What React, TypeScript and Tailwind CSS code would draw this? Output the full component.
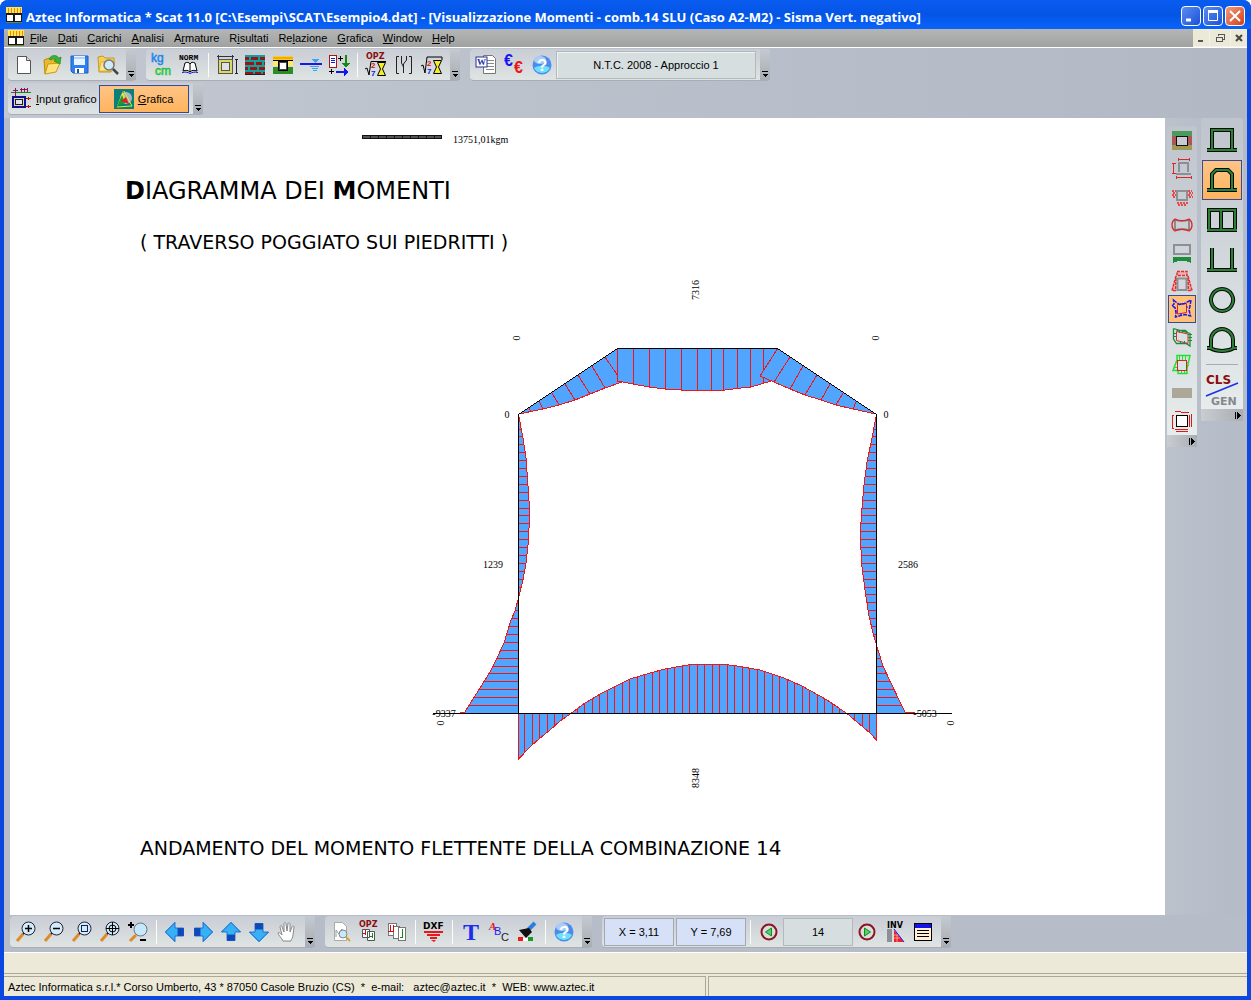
import type { ReactNode } from 'react';
import { clsx } from 'clsx';

type Pt = [number, number];

const toPoints = (pts: Pt[]) => pts.map(p => p.join(',')).join(' ');

// linear interpolation of a polyline, looking up `at` on one axis
function lookup(pts: Pt[], at: number, axis: 0 | 1) {
  const other = axis === 0 ? 1 : 0;
  for (let i = 1; i < pts.length; i++) {
    const a = pts[i - 1];
    const b = pts[i];
    if (at >= a[axis] && at <= b[axis]) {
      const t = (at - a[axis]) / (b[axis] - a[axis]);
      return a[other] + (b[other] - a[other]) * t;
    }
  }
  return null;
}

function Icon({ children, w = 22, h = 22, soft = false }: { children: ReactNode; w?: number; h?: number; soft?: boolean }) {
  return (
    <svg width={w} height={h} viewBox={`0 0 ${w} ${h}`} fill="none" className="overflow-visible" shapeRendering={soft ? 'auto' : 'crispEdges'} aria-hidden="true">
      {children}
    </svg>
  );
}

function AppIcon() {
  return (
    <Icon w={16} h={16}>
      <rect width="16" height="7" fill="#ffe94a" />
      <path d="M2.500 1v5M5.500 1v5M8.500 1v5M11.500 1v5M14.500 1v5" stroke="#f08020" />
      <rect y="6" width="16" height="9" fill="#181818" />
      <rect x="1" y="8" width="6" height="6" fill="#fff" />
      <rect x="9" y="8" width="6" height="6" fill="#fff" />
      <rect y="15" width="16" height="1" fill="#6a8a30" />
    </Icon>
  );
}

/* ---------- main toolbar icons ---------- */

const newIcon = (
  <Icon soft>
    <path d="M4.500 2.500h9l4 4v13h-13z" fill="#fff" stroke="#555" />
    <path d="M13.500 2.500v4h4" fill="#ddd" stroke="#555" />
  </Icon>
);

const openIcon = (
  <Icon soft>
    <path d="M3 6l5-2 2 2 6-1v5l-9 2-3 8z" fill="#e8b92c" stroke="#b88a10" />
    <path d="M7 10l12-1-4 9-11 2z" fill="#ffe27a" stroke="#c79a1c" />
    <path d="M8 5c2-4 7-5 10-1l2-1-1 7-6-3 2-1c-1-2-4-2-5 0z" fill="#35b435" stroke="#188018" strokeWidth=".6" />
  </Icon>
);

const saveIcon = (
  <Icon soft>
    <path d="M2 2h17v17H4l-2-2z" fill="#2f80ee" stroke="#1c5fc0" />
    <rect x="5" y="2" width="11" height="9" fill="#eaf4ff" />
    <path d="M5 4h11" stroke="#68b4ff" />
    <rect x="6" y="14" width="9" height="5" fill="#fff" />
    <rect x="8" y="15" width="2" height="4" fill="#2050a0" />
  </Icon>
);

const findIcon = (
  <Icon soft>
    <path d="M1 3l5-1 2 2h9v5l-3 9H2z" fill="#f6cf58" stroke="#c39a22" />
    <path d="M4 8h14l-3 9H2z" fill="#ffe58a" stroke="#c39a22" strokeWidth=".6" />
    <circle cx="12" cy="11" r="5" fill="#cfe8fa" stroke="#777" strokeWidth="1.500" />
    <path d="M16 15l5 5" stroke="#444" strokeWidth="2.500" />
  </Icon>
);

const unitsIcon = (
  <Icon w={24} h={24} soft>
    <text x="1" y="9" fontSize="12" fontFamily="Liberation Sans" fill="#1c86ee" stroke="#1c86ee" strokeWidth=".5">kg</text>
    <text x="5" y="22" fontSize="12" fontFamily="Liberation Sans" fill="#1fc43a" stroke="#1fc43a" strokeWidth=".5">cm</text>
  </Icon>
);

const normIcon = (
  <Icon w={24} h={24} soft>
    <text x="1" y="7" fontSize="8" fontWeight="bold" fontFamily="Liberation Mono" fill="#000">NORM</text>
    <path d="M5 18l2-8c2-1 4-1 5 1 1-2 3-2 5-1l2 8c-3-1-5-1-7 1-2-2-4-2-7-1z" fill="#fff" stroke="#000" />
    <path d="M12 11v8" stroke="#000" />
    <path d="M4 19.500c4-1 6 0 8 1 2-1 4-2 8-1" stroke="#1414c8" />
  </Icon>
);

const sectionIcon = (
  <Icon>
    <rect x="3" y="6" width="13" height="13" fill="#dcd860" />
    <rect x="2.500" y="5.500" width="14" height="14" stroke="#555" />
    <rect x="5.500" y="8.500" width="8" height="8" fill="#dde1e4" stroke="#555" />
    <path d="M1 2.500h17M2.500 1v4M16.500 1v4" stroke="#333" />
    <path d="M20.500 5v15M19 5.500h3M19 19.500h3" stroke="#222" />
  </Icon>
);

const brickIcon = (
  <Icon>
    <rect x="1" y="1" width="20" height="20" fill="#9a1414" />
    <path d="M1 2h20M1 7h20M1 12h20M1 17h20M6 2v5M15 2v5M11 7v5M19 7v5M5 12v5M14 12v5M10 17v4M18 17v4" stroke="#10a0a0" strokeWidth="2" />
    <path d="M1 20.500h20" stroke="#222" />
  </Icon>
);

const soilIcon = (
  <Icon>
    <rect x="1" y="2" width="20" height="5" fill="#f6d21e" />
    <rect x="1" y="3" width="20" height="2" fill="#f0a81c" />
    <rect x="1" y="6" width="20" height="6" fill="#ffe76e" />
    <rect x="1" y="13" width="20" height="7" fill="#2d8c22" />
    <path d="M1 6.500h20" stroke="#000" />
    <rect x="7" y="8" width="8" height="8" fill="#fff" />
    <rect x="6.500" y="7.500" width="9" height="9" stroke="#000" />
    <rect x="7.500" y="8.500" width="7" height="7" stroke="#444" />
  </Icon>
);

const waterIcon = (
  <Icon>
    <path d="M0 10h22" stroke="#1a1ae8" strokeWidth="2" />
    <path d="M12 5h7l-4 4z" fill="#3aa6f0" />
    <path d="M10 12.500h9M12 14.500h6M13 16.500h4" stroke="#3aa6f0" />
  </Icon>
);

const loadIcon = (
  <Icon>
    <rect x="1.500" y="1.500" width="7" height="12" fill="#fff" stroke="#a01818" />
    <path d="M3 4.500h4M3 6.500h4M3 8.500h4" stroke="#1818d8" />
    <path d="M10 4.500h5M12.500 2v5M1 17.500h5M3.500 15v5" stroke="#000" />
    <path d="M18 1v11" stroke="#148a14" strokeWidth="2" />
    <path d="M14 9h8l-4 5z" fill="#148a14" />
    <path d="M8 18h9" stroke="#1414f0" strokeWidth="2" />
    <path d="M16 14l5 4-5 4z" fill="#1414f0" />
  </Icon>
);

const calcGlyphs = (
  <>
    <text x="6" y="12" fontSize="8" fontWeight="bold" fontFamily="Liberation Sans" fill="#e01010">2</text>
    <text x="6" y="20" fontSize="8" fontWeight="bold" fontFamily="Liberation Sans" fill="#1414e8">7</text>
    <path d="M12.500 6.500h8l-3 6.500 3 6.500h-8l3-6.500z" fill="#f4ec28" stroke="#000" />
  </>
);

const dpzCalcIcon = (
  <Icon soft>
    <text x="1" y="5" fontSize="8" fontWeight="bold" fontFamily="DejaVu Sans" fill="#8c0c0c">OPZ</text>
    <path d="M0 15l2-1 2 7 2-13.500h15" stroke="#000" />
    <g transform="translate(0 2)">{calcGlyphs}</g>
  </Icon>
);

const curveIcon = (
  <Icon soft>
    <path d="M6 2.500H3.500v17H6M16 2.500h2.500v17H16" stroke="#222" />
    <path d="M8.500 2v7l2 4v6M13.500 2v4l-3 4v3" stroke="#222" />
  </Icon>
);

const calcIcon = (
  <Icon soft>
    <path d="M0 12l2-1 2 8 2-16h15v3" stroke="#000" />
    {calcGlyphs}
  </Icon>
);

const wordIcon = (
  <Icon soft>
    <path d="M8.500 1.500h9l3 3v15h-12z" fill="#fff" stroke="#777" />
    <path d="M12 6.500h7M12 9.500h7M11 12.500h8M11 15.500h8" stroke="#888" />
    <rect x="1" y="3" width="11" height="10" fill="#fff" stroke="#24309a" />
    <text x="2" y="11" fontSize="9" fontWeight="bold" fontFamily="Liberation Serif" fill="#24309a">W</text>
  </Icon>
);

const euroIcon = (
  <Icon soft>
    <text x="1" y="12" fontSize="16" fontWeight="bold" fontFamily="Liberation Sans" fill="#1414f0">€</text>
    <text x="11" y="19" fontSize="16" fontWeight="bold" fontFamily="Liberation Sans" fill="#f01414">€</text>
  </Icon>
);

const helpIcon = (
  <Icon soft>
    <circle cx="11" cy="11" r="9.500" fill="#4a8cee" />
    <path d="M3 14a9 9 0 0 0 16 0c-4-3-12-3-16 0z" fill="#6de0fa" />
    <ellipse cx="9" cy="6" rx="6" ry="4" fill="#a9cdf8" />
    <text x="6" y="17" fontSize="17" fontWeight="bold" fontFamily="Liberation Sans" fill="#fff">?</text>
  </Icon>
);

const inputIcon = (
  <Icon w={22} h={22}>
    <path d="M1 4.500h20" stroke="#108a10" />
    <path d="M5.500 0v8M3 2.500h5M11.500 0v4M14.500 0v4M17.500 0v4M10 1.500h8" stroke="#8c1060" />
    <rect x="3" y="9" width="12" height="10" fill="#e9e06a" stroke="#10108c" strokeWidth="2" />
    <rect x="5.500" y="11.500" width="7" height="5" fill="#dfe3e6" stroke="#10108c" />
    <path d="M17 10.500h4M17 18.500h4" stroke="#b01010" />
    <path d="M16 10.500l3-2v4zM16 18.500l3-2v4z" fill="#b01010" />
  </Icon>
);

const graphIcon = (
  <Icon w={20} h={20} soft>
    <rect width="20" height="20" fill="#0c7f7a" />
    <circle cx="12" cy="9" r="6" fill="#a8b8c8" />
    <path d="M9 2l2 8-8 7z" fill="#e8e82c" />
    <path d="M3 17l5-11 3 8z" fill="#1a9c2c" />
    <path d="M7 12l5-4 3 7z" fill="#e02020" />
    <path d="M10 2l8 15L3 18" stroke="#d8f020" />
  </Icon>
);

/* ---------- bottom toolbar icons ---------- */

function Lens({ children }: { children?: ReactNode }) {
  return (
    <Icon soft>
      <path d="M2 20l6-7" stroke="#e08a28" strokeWidth="3" />
      <path d="M8 13l2-2" stroke="#222" strokeWidth="2" />
      <circle cx="13.500" cy="7.500" r="6.500" fill="#d2eafa" stroke="#223" />
      {children}
    </Icon>
  );
}

const fitIcon = (
  <Icon soft>
    <path d="M3 20l6-6" stroke="#e08a28" strokeWidth="3" />
    <circle cx="13.500" cy="8.500" r="6.500" fill="#c6e8fb" stroke="#678" />
    <path d="M1 4h6M4 1v6M13 19h6" stroke="#000" strokeWidth="2" />
  </Icon>
);

function Arrow({ turn }: { turn: number }) {
  return (
    <Icon soft>
      <g transform={`rotate(${turn} 11 11)`}>
        <path d="M1 11L11 1v6h9v8h-9v6z" fill="#1a86e4" />
        <path d="M1 11L11 1v6h2v8h-2v6z" fill="#38b0f6" />
        <path d="M14 7h6v8h-6z" fill="#1148b8" />
        <path d="M1.500 11L11 1.500v5.500h8.500v8H11v5.500z" stroke="#1458c0" strokeWidth=".8" />
      </g>
    </Icon>
  );
}

const handIcon = (
  <Icon soft>
    <path d="M7 20c-1-3-5-6-5-8 1-1 2 0 4 2L4 6c0-2 2-2 2 0l2 5V3c0-2 2-2 2 0l1 7 1-7c0-2 2-1 2 0v8l2-5c1-2 2-1 2 0l-1 8c0 3-2 4-2 6z" fill="#fff" stroke="#888" />
  </Icon>
);

const previewIcon = (
  <Icon soft>
    <path d="M4.500 1.500h8l4 4v14h-12z" fill="#fff" stroke="#aaa" />
    <path d="M6 16V9l3 4 3-5v8" stroke="#999" />
    <circle cx="13" cy="13" r="4" fill="#c6e8fb" stroke="#888" />
    <path d="M16 16l4 4" stroke="#e0a030" strokeWidth="2" />
  </Icon>
);

const dpzPageIcon = (
  <Icon soft>
    <text x="1" y="6" fontSize="8" fontWeight="bold" fontFamily="DejaVu Sans" fill="#8c0c0c">OPZ</text>
    <path d="M4.500 8.500h7v8h-7zM9.500 10.500h7v9h-7z" fill="#fff" stroke="#555" />
    <path d="M7.500 9v5M5 12.500h2" stroke="#d01010" />
    <path d="M14.500 12v5M12 15.500h2" stroke="#108a10" />
  </Icon>
);

const pagesIcon = (
  <Icon>
    <path d="M2.500 2.500h8v12h-8z" fill="#fff" stroke="#777" />
    <path d="M7.500 5.500h6v12h-6z" fill="#fff" stroke="#777" />
    <path d="M12.500 6.500h7v13h-7z" fill="#fff" stroke="#777" />
    <path d="M4.500 4v7M2 10.500h6M7.500 4v6" stroke="#d01010" />
    <path d="M16.500 8v9M14 16.500h3" stroke="#108a10" />
  </Icon>
);

const dxfIcon = (
  <Icon soft>
    <text x="0" y="8" fontSize="9" fontWeight="bold" fontFamily="DejaVu Sans" fill="#000">DXF</text>
    <path d="M1 11h19M4 14h13M7 17h7" stroke="#e81818" strokeWidth="2" />
    <path d="M8 19h5l-2 2z" fill="#e81818" />
  </Icon>
);

const textIcon = (
  <Icon soft>
    <text x="3" y="19" fontSize="24" fontWeight="bold" fontFamily="Liberation Serif" fill="#1c2cf0">T</text>
  </Icon>
);

const abcIcon = (
  <Icon soft>
    <text x="1" y="9" fontSize="11" fontStyle="italic" fontWeight="bold" fontFamily="Liberation Serif" fill="#e01818">A</text>
    <text x="6" y="14" fontSize="11" fontFamily="Liberation Sans" fill="#1c1cf0">B</text>
    <text x="13" y="20" fontSize="11" fontFamily="Liberation Sans" fill="#222">C</text>
  </Icon>
);

const brushIcon = (
  <Icon soft>
    <path d="M19 2l-7 7" stroke="#2a80e0" strokeWidth="4" />
    <path d="M3 9l10-2 3 4-6 6z" fill="#111" />
    <path d="M2 16h5v4H2z" fill="#f01818" />
    <path d="M7 17h5v3H7z" fill="#fff" />
    <path d="M12 16h5v4h-5z" fill="#189a28" />
  </Icon>
);

function StepIcon({ flip = false }: { flip?: boolean }) {
  return (
    <Icon soft>
      <circle cx="11" cy="11" r="7.500" fill="#d8dddd" stroke="#8c1420" strokeWidth="2" />
      <path d={flip ? 'M8.500 7l6 4-6 4z' : 'M13.500 7l-6 4 6 4z'} fill="#5ad060" stroke="#148a28" />
    </Icon>
  );
}

const invIcon = (
  <Icon soft>
    <text x="3" y="7" fontSize="8" fontWeight="bold" fontFamily="DejaVu Sans" fill="#000">INV</text>
    <rect x="3" y="8" width="5" height="13" fill="#8c9094" />
    <path d="M10 9v12h10z" fill="#f02020" />
    <path d="M10 8l10 13" stroke="#1818f0" />
    <path d="M10 14h4M10 17h6M13 14v7" stroke="#fff" strokeWidth=".5" />
  </Icon>
);

const listIcon = (
  <Icon>
    <rect x="2" y="3" width="18" height="17" fill="#fff0d8" />
    <rect x="2.500" y="2.500" width="17" height="17" stroke="#000" />
    <rect x="3" y="3" width="16" height="4" fill="#1414e8" />
    <path d="M5 9.500h12M5 12.500h12M5 15.500h12" stroke="#000" />
  </Icon>
);

/* ---------- side palette icons ---------- */

const resultIcons: { name: string; icon: ReactNode; active?: boolean }[] = [
  {
    name: 'Terreno',
    icon: (
      <Icon>
        <rect x="1" y="1" width="20" height="5" fill="#2c9040" fillOpacity=".8" />
        <rect x="1" y="6" width="4" height="9" fill="#a83a3a" fillOpacity=".8" />
        <rect x="17" y="6" width="4" height="9" fill="#a83a3a" fillOpacity=".8" />
        <rect x="1" y="15" width="20" height="5" fill="#a09a58" />
        <rect x="6" y="7" width="10" height="8" fill="#c8ccd0" />
        <rect x="5.500" y="6.500" width="11" height="9" stroke="#111" />
      </Icon>
    ),
  },
  {
    name: 'Geometria',
    icon: (
      <Icon>
        <path d="M8 14V5h9v9M5 16h15" stroke="#8c9094" strokeWidth="2" />
        <path d="M7 1.500h12M7 0v3M18.500 0v3M2.500 5v11M1 5.500h4M1 15.500h4M5 19.500h16M5.500 18v3M20.500 18v3" stroke="#d82828" />
      </Icon>
    ),
  },
  {
    name: 'Vincoli',
    icon: (
      <Icon>
        <path d="M1 5h4M2 7h4M1 9h4M2 11h4M17 5h4M18 7h4M17 9h4M18 11h4M6 17h11M7 19h9" stroke="#e84848" strokeWidth="2" strokeDasharray="2 1" />
        <rect x="6" y="5" width="10" height="9" stroke="#8c9094" strokeWidth="2" />
      </Icon>
    ),
  },
  {
    name: 'Deformata',
    icon: (
      <Icon soft>
        <path d="M4 6c4 1 10 1 14 0v10c-4-1-10-1-14 0z" stroke="#777" strokeWidth="1.500" />
        <path d="M4 5c4 2 10 2 14 0 4 3 4 9 0 12-4-2-10-2-14 0-4-3-4-9 0-12z" stroke="#e02828" strokeWidth="1.300" />
      </Icon>
    ),
  },
  {
    name: 'Pressioni',
    icon: (
      <Icon>
        <rect x="3" y="3" width="16" height="9" stroke="#8c9094" strokeWidth="2" />
        <path d="M2 15h18v6c-4-3-14-3-18 0z" fill="#1e8c38" />
      </Icon>
    ),
  },
  {
    name: 'Spinte',
    icon: (
      <Icon soft>
        <path d="M6.500 20V8.500h9V20z" stroke="#8c9094" strokeWidth="2" />
        <path d="M6 1.500h10v4H6zM5 6L1 20.500h3.500zM17 6l4 14.500h-3.500z" fill="#f0b0b0" stroke="#e03030" strokeWidth="1.500" strokeDasharray="3 1" />
      </Icon>
    ),
  },
  {
    name: 'Momenti',
    active: true,
    icon: (
      <Icon soft>
        <path d="M6.500 6.500l9-1v9l-9 1.500z" stroke="#e02020" />
        <path d="M2.500 2l3 2.500 3 2 5-1 6.500-3.500-1 6-1 4 1.500 6-5-1.500-5 1-5 1.500.500-4.500-1-5-3-1.500 2-2z" stroke="#1818f0" strokeWidth="1.500" strokeDasharray="4 1" />
        <path d="M4 13h2M10 5v2M15 9h2M10 15v2" stroke="#1818f0" />
      </Icon>
    ),
  },
  {
    name: 'Taglio',
    icon: (
      <Icon soft>
        <path d="M2.500 2.500L19 7.500v12.500L15 17.500H5.500L2.500 13V2.500M5.500 4.500h9l2 2" stroke="#1c8a3a" strokeWidth="1.300" />
        <path d="M5.500 5.500L17 8v9.500L5.500 14.500z" stroke="#d03030" />
        <path d="M17 8.500h4M17 11.500h4M17 14.500h4M2 7.500h3M2 10.500h3M8.500 4v3M11.500 5v2M9.500 15v3M13.500 15v3" stroke="#1c8a3a" />
      </Icon>
    ),
  },
  {
    name: 'Sforzo normale',
    icon: (
      <Icon soft>
        <path d="M6 1.500h13l-3 13v5H7v-3H2L6 6z" stroke="#22e030" strokeWidth="1.500" />
        <path d="M8.500 1v5M11.500 1v5M14.500 1v5M16 8.500h2M16 11.500h2M4 13.500h3M10.500 16v3M13.500 16v3" stroke="#22e030" />
        <rect x="6.500" y="6.500" width="9" height="10" stroke="#e02020" />
      </Icon>
    ),
  },
  { name: 'Piastra', icon: <Icon><rect x="1" y="6" width="20" height="10" fill="#aca899" /></Icon> },
  {
    name: 'Armature',
    icon: (
      <Icon>
        <rect x="5" y="5" width="12" height="12" fill="#fff" />
        <rect x="5.500" y="5.500" width="11" height="11" stroke="#000" />
        <path d="M4 1.500h6M10 2.500h8M1.500 5v13M1 5.500h2M1 18.500h2M20.500 4v13M18.500 5v12M4 19.500h13M5 21.500h12" stroke="#e01818" />
      </Icon>
    ),
  },
];

function Outline({ d }: { d: string }) {
  return (
    <Icon w={34} h={28} soft>
      <path d={d} stroke="#0a0a0a" strokeWidth="4" />
      <path d={d} stroke="#2a8034" strokeWidth="2" />
    </Icon>
  );
}

const shapes: { name: string; d: string; active?: boolean }[] = [
  { name: 'Scatolare', d: 'M7 24V4h20v20M2 24h30' },
  { name: 'Scatolare smussato', d: 'M7 24V8l4-4h12l4 4v16M2 24h30', active: true },
  { name: 'Scatolare doppio', d: 'M4 24V4h26v20M16 4v20M2 24h30' },
  { name: 'Canale', d: 'M7 2v22M27 2v22M2 24h30' },
  { name: 'Circolare', d: 'M17 3a11 11 0 1 0 .1 0z' },
  { name: 'Arco', d: 'M6 22V14a11 11 0 0 1 22 0v8M2 22h3c7 4 17 4 24 0h3' },
];

/* ---------- toolbar pieces ---------- */

function Tool({ name, children }: { name: string; children: ReactNode }) {
  return (
    <button type="button" aria-label={name} className="flex w-7 h-7 items-center justify-center">
      {children}
    </button>
  );
}

function Sep() {
  return <div className="mx-1 h-6 w-px bg-white/90" />;
}

function More() {
  return (
    <button type="button" aria-label="Altri comandi" className="flex w-2.5 self-stretch items-end justify-center ml-1 pb-0.5 bg-linear-to-b from-[#c4c8cf] to-[#a9adb4]">
      <svg width="6" height="7" viewBox="0 0 6 7" shapeRendering="crispEdges" aria-hidden="true">
        <rect width="6" height="1" fill="#000" />
        <path d="M0 3h6L3 6z" fill="#000" />
      </svg>
    </button>
  );
}

function Group({ children, label }: { children: ReactNode; label: string }) {
  return (
    <div role="toolbar" aria-label={label} className="flex h-8 items-center pl-0.5 rounded-sm bg-linear-to-b from-[#c9cdd5] to-[#dfe4e3] border-b border-[#a9adb4]">
      {children}
    </div>
  );
}

function Palette({ children, className, label }: { children: ReactNode; className: string; label: string }) {
  return (
    <div role="toolbar" aria-label={label} className={clsx('flex flex-col items-center rounded-sm bg-linear-to-b from-[#bfc4cd] to-[#e8eeed]', className)}>
      {children}
      <button type="button" aria-label="Altri comandi" className="flex w-full h-3 items-center justify-end pr-0.5 bg-linear-to-r from-[#c9cdd0] to-[#a9adb4]">
        <svg width="6" height="7" viewBox="0 0 6 7" shapeRendering="crispEdges" aria-hidden="true">
          <rect width="1" height="7" fill="#000" />
          <path d="M2 0l4 3-4 4z" fill="#000" />
        </svg>
      </button>
    </div>
  );
}

/* ---------- bending moment diagram ---------- */

const AXIS_LEFT = 518.5;
const AXIS_RIGHT = 876.5;
const BASE = 713.5;

const leftWall: Pt[] = [
  [518.5, 414.5], [523, 438], [526, 458], [528, 486], [529, 500], [529.5, 520],
  [528, 545], [526, 563], [523, 580], [518.5, 598], [515, 611], [511, 620], [504, 643],
  [497, 658], [490, 672], [480, 688], [468, 707], [465, 712],
];

const rightWall: Pt[] = [
  [876.5, 414.5], [872, 438], [867, 462], [864, 485], [862, 508], [860.5, 530], [861, 550],
  [862, 567], [865, 590], [869, 616], [873, 633], [876.5, 645], [883, 666], [891, 683],
  [900, 702], [905, 712],
];

const slab: Pt[] = [
  [518.5, 759], [531, 746], [539, 739], [550, 730], [560, 721], [571, 713.5], [585, 703],
  [602, 693], [630, 679], [650, 673], [665, 669], [682, 666], [695, 664], [721, 664],
  [737, 666], [760, 670], [784, 678], [802, 686], [827, 700], [847, 713.5], [870, 733], [876.5, 740],
];

const roof: Pt[] = [
  [617.5, 381], [633, 384], [649, 387], [665, 389], [681, 390], [725, 390], [741, 388], [751, 387], [771, 381],
];

const leftHaunch: Pt[] = [[519, 414], [543, 409], [559, 405], [575, 400], [590, 394], [605, 388], [622, 382]];
const rightHaunch: Pt[] = [[760, 376], [774, 382], [790, 389], [805, 395], [821, 400], [836, 405], [853, 409], [876, 414]];

const leftRibs = [
  [529, 408, 531, 412], [539, 401, 543, 409], [552, 393, 559, 405], [565, 384, 575, 400],
  [578, 375, 590, 394], [592, 366, 605, 388], [605, 357, 618, 376],
];
const rightRibs = [
  [778, 348, 760, 376], [790, 357, 774, 382], [803, 366, 790, 389], [817, 375, 805, 395],
  [830, 384, 821, 400], [843, 393, 836, 405], [856, 402, 853, 409],
];
const roofRibs = [617.5, 633.5, 649.5, 665.5, 681.5, 697.5, 711.5, 723.5, 737.5, 750.5, 763.5];

const wallRibs = Array.from({ length: 36 }, (_, i) => Math.round(705 - i * 7.9) + 0.5);
const slabRibs = Array.from({ length: 47 }, (_, i) => Math.round(524 + i * 7.5) + 0.5);

const values: { x: number; y: number; text: string; up?: boolean }[] = [
  { x: 507, y: 418, text: '0' },
  { x: 886, y: 418, text: '0' },
  { x: 493, y: 568, text: '1239' },
  { x: 908, y: 568, text: '2586' },
  { x: 444, y: 717, text: '-9337' },
  { x: 925, y: 717, text: '-5053' },
  { x: 520, y: 338, text: '0', up: true },
  { x: 879, y: 338, text: '0', up: true },
  { x: 699, y: 290, text: '7316', up: true },
  { x: 699, y: 778, text: '8348', up: true },
  { x: 444, y: 723, text: '0', up: true },
  { x: 954, y: 723, text: '0', up: true },
];

function MomentDiagram() {
  return (
    <svg viewBox="10 118 1155 797" className="block w-full" role="img" aria-label="Diagramma dei Momenti">
      <rect x="362" y="135" width="80" height="4" fill="#111" />
      <path d="M363 137h78" stroke="#999" strokeDasharray="7 1" />
      <text x="453" y="143" fontSize="10" fontFamily="Liberation Serif, serif">13751,01kgm</text>

      <g fontFamily="DejaVu Sans, sans-serif">
        <text x="125" y="199" fontSize="24">
          <tspan fontWeight="bold">D</tspan>IAGRAMMA DEI <tspan fontWeight="bold">M</tspan>OMENTI
        </text>
        <text x="140" y="249" fontSize="19">( TRAVERSO POGGIATO SUI PIEDRITTI )</text>
        <text x="140" y="855" fontSize="19">
          <tspan fontSize="20">A</tspan>NDAMENTO DEL MOMENTO FLETTENTE DELLA COMBINAZIONE <tspan fontSize="20">14</tspan>
        </text>
      </g>

      <g shapeRendering="crispEdges" fill="#52a5ff" stroke="#f51414">
        <polygon points={toPoints([[617.5, 348.5], ...leftHaunch.slice().reverse()])} stroke="none" />
        <polyline points={toPoints(leftHaunch)} fill="none" />
        {leftRibs.map(([x1, y1, x2, y2]) => <line key={x1} x1={x1} y1={y1} x2={x2} y2={y2} />)}

        <polygon points={toPoints([[617.5, 348.5], ...roof, [777.5, 348.5]])} stroke="none" />
        <polyline points={toPoints(roof)} fill="none" />
        {roofRibs.map(x => (
          <line key={x} x1={x} x2={x} y1="348" y2={lookup(roof, x, 0) ?? 381} />
        ))}

        <polygon points={toPoints([[777.5, 348.5], ...rightHaunch])} stroke="none" />
        <polyline points={toPoints(rightHaunch)} fill="none" />
        {rightRibs.map(([x1, y1, x2, y2]) => <line key={x1} x1={x1} y1={y1} x2={x2} y2={y2} />)}

        <polygon points={toPoints([...leftWall, [461, BASE], [AXIS_LEFT, BASE]])} stroke="none" />
        <polyline points={toPoints([...leftWall, [458, BASE]])} fill="none" />
        {wallRibs.map(y => (
          <line key={y} y1={y} y2={y} x1={AXIS_LEFT} x2={lookup(leftWall, y, 1) ?? AXIS_LEFT} />
        ))}

        <polygon points={toPoints([...rightWall, [910, BASE], [AXIS_RIGHT, BASE]])} stroke="none" />
        <polyline points={toPoints([...rightWall, [920, BASE]])} fill="none" />
        {wallRibs.map(y => (
          <line key={y} y1={y} y2={y} x1={AXIS_RIGHT} x2={lookup(rightWall, y, 1) ?? AXIS_RIGHT} />
        ))}

        <polygon points={toPoints([[AXIS_LEFT, BASE], ...slab, [AXIS_RIGHT, BASE]])} stroke="none" />
        <polyline points={toPoints([[AXIS_LEFT, BASE], ...slab, [AXIS_RIGHT, BASE]])} fill="none" />
        {slabRibs.map(x => (
          <line key={x} x1={x} x2={x} y1={BASE} y2={lookup(slab, x, 0) ?? BASE} />
        ))}
      </g>

      <g shapeRendering="crispEdges" fill="none" stroke="#000">
        <path d="M518.500 713V414.500L617.500 348.500H777.500L876.500 414.500V713" />
        <path d="M433 713.500H952" />
      </g>

      <g fontFamily="Liberation Serif, serif" fontSize="10" textAnchor="middle">
        {values.map(v => (
          <text key={`${v.x}-${v.y}`} x={v.x} y={v.y} transform={v.up ? `rotate(-90 ${v.x} ${v.y})` : undefined}>
            {v.text}
          </text>
        ))}
      </g>
    </svg>
  );
}

/* ---------- page ---------- */

const menu = ['File', 'Dati', 'Carichi', 'Analisi', 'Armature', 'Risultati', 'Relazione', 'Grafica', 'Window', 'Help'];
// position of the underlined access key in each entry
const accessKey: Record<string, number> = { Armature: 1, Risultati: 1, Relazione: 2 };

function WindowButton({ name, close = false, children }: { name: string; close?: boolean; children: ReactNode }) {
  return (
    <button
      type="button"
      aria-label={name}
      className={clsx(
        'flex size-5 items-center justify-center rounded-sm border border-white',
        close ? 'bg-linear-to-br from-[#f0997c] to-[#d23a10]' : 'bg-linear-to-br from-[#5c8cf0] to-[#1c4fd8]',
      )}
    >
      <svg width="14" height="14" viewBox="0 0 14 14" fill="none" stroke="#fff" aria-hidden="true">{children}</svg>
    </button>
  );
}

export default function App() {
  return (
    <div className="flex min-h-screen flex-col rounded-t-lg border-x-4 border-b-4 border-[#0a48e0] bg-[#b6bdc8] font-['Liberation_Sans',Arial,sans-serif] text-[11px] leading-4 text-black">
      <header className="-mx-1 flex h-[29px] items-center rounded-t-lg bg-linear-to-b from-[#0a5cf0] via-[#0455e6] to-[#0a64fa] pl-1.5 pr-1.5">
        <AppIcon />
        <h1 className="ml-1 flex-1 truncate pt-1 font-['Open_Sans',sans-serif] text-[13px] font-bold text-white whitespace-nowrap">
          Aztec Informatica * Scat 11.0 [C:\Esempi\SCAT\Esempio4.dat] - [Visualizzazione Momenti - comb.14 SLU (Caso A2-M2) - Sisma Vert. negativo]
        </h1>
        <div className="flex gap-0.5 pt-0.5">
          <WindowButton name="Riduci a icona"><path d="M2 11h5" strokeWidth="3" /></WindowButton>
          <WindowButton name="Ingrandisci"><path d="M2 2.500h10" strokeWidth="3" /><path d="M2.500 2v9.500h9V2" /></WindowButton>
          <WindowButton name="Chiudi" close><path d="M2 2l10 10M12 2L2 12" strokeWidth="2" /></WindowButton>
        </div>
      </header>

      <nav aria-label="Menu" className="flex h-[19px] items-center border-b border-white bg-linear-to-b from-[#b5b5b5] to-[#a0a2a2] pl-1">
        <AppIcon />
        <ul className="flex flex-1 gap-2.5 pl-1.5">
          {menu.map(item => {
            const k = accessKey[item] ?? 0;
            return (
              <li key={item}>
                <button type="button">{item.slice(0, k)}<u>{item[k]}</u>{item.slice(k + 1)}</button>
              </li>
            );
          })}
        </ul>
        <div className="flex h-full items-center gap-px bg-[#f4f2e8] text-[#444]">
          <button type="button" aria-label="Riduci finestra" className="flex h-4 w-4 items-center justify-center bg-[#ece9d8]">
            <svg width="8" height="8" viewBox="0 0 8 8" aria-hidden="true"><path d="M1 7h5" stroke="#555" strokeWidth="2" /></svg>
          </button>
          <button type="button" aria-label="Ripristina finestra" className="flex h-4 w-5 items-center justify-center bg-[#ece9d8]">
            <svg width="10" height="10" viewBox="0 0 10 10" fill="none" stroke="#555" shapeRendering="crispEdges" aria-hidden="true">
              <path d="M3.500 3V1.500h6v5H8M3 1h7M1.500 4.500h6v4h-6zM1 4h7" />
            </svg>
          </button>
          <button type="button" aria-label="Chiudi finestra" className="flex h-4 w-4 items-center justify-center bg-[#ece9d8]">
            <svg width="8" height="8" viewBox="0 0 8 8" aria-hidden="true"><path d="M1 1l6 6M7 1L1 7" stroke="#444" strokeWidth="2" /></svg>
          </button>
        </div>
      </nav>

      <div className="flex flex-col gap-0.5 bg-linear-to-r from-[#c2c7d1] to-[#b2b9c4] pl-1 pt-px pb-[3px]">
        <div className="flex gap-2.5">
          <Group label="Archivio">
            <Tool name="Nuovo">{newIcon}</Tool>
            <Tool name="Apri">{openIcon}</Tool>
            <Tool name="Salva">{saveIcon}</Tool>
            <Tool name="Cerca">{findIcon}</Tool>
            <More />
          </Group>
          <Group label="Dati e analisi">
            <Tool name="Unità di misura">{unitsIcon}</Tool>
            <Tool name="Normativa">{normIcon}</Tool>
            <Sep />
            <Tool name="Geometria">{sectionIcon}</Tool>
            <Tool name="Materiali">{brickIcon}</Tool>
            <Tool name="Terreno">{soilIcon}</Tool>
            <Tool name="Falda">{waterIcon}</Tool>
            <Tool name="Condizioni di carico">{loadIcon}</Tool>
            <Sep />
            <Tool name="Opzioni analisi">{dpzCalcIcon}</Tool>
            <Tool name="Combinazioni">{curveIcon}</Tool>
            <Tool name="Analisi">{calcIcon}</Tool>
            <More />
          </Group>
          <Group label="Relazione">
            <Tool name="Relazione">{wordIcon}</Tool>
            <Tool name="Computo">{euroIcon}</Tool>
            <Tool name="Guida">{helpIcon}</Tool>
            <button type="button" className="h-7 w-50 border border-[#b3b9bb] bg-[#d6dedf] shadow-[inset_1px_1px_0_#eef2f2]">
              N.T.C. 2008 - Approccio 1
            </button>
            <More />
          </Group>
        </div>
        <div className="flex">
          <Group label="Modalità">
            <button type="button" className="flex h-7 items-center gap-1">
              {inputIcon}
              <span className="pr-0.5"><u>I</u>nput grafico</span>
            </button>
            <button type="button" className="flex h-7 w-[90px] items-center justify-center gap-1 border border-[#3a4a90] bg-linear-to-b from-[#fdc486] to-[#ffb45c]">
              {graphIcon}
              <span><u>G</u>rafica</span>
            </button>
            <More />
          </Group>
        </div>
      </div>

      <div className="flex flex-1">
        <main className="ml-1.5 flex-1 bg-white">
          <MomentDiagram />
        </main>
        <aside className="flex items-start gap-1 bg-linear-to-r from-[#bcc2cc] to-[#b4bac6] pl-0.5 pr-1">
          <Palette label="Risultati" className="mt-2 w-[30px] pt-px">
            {resultIcons.map(r => (
              <button
                key={r.name}
                type="button"
                aria-label={r.name}
                className={clsx('flex size-7 items-center justify-center', r.active && 'border border-[#3a4a90] bg-[#ffc078]')}
              >
                {r.icon}
              </button>
            ))}
          </Palette>
          <Palette label="Tipo di struttura" className="w-[42px] pt-0.5">
            {shapes.map(s => (
              <button
                key={s.name}
                type="button"
                aria-label={s.name}
                className={clsx('flex size-10 items-center justify-center', s.active && 'border border-[#3a4a90] bg-linear-to-b from-[#fdc486] to-[#ffb45c]')}
              >
                <Outline d={s.d} />
              </button>
            ))}
            <div className="my-1 h-px w-8 bg-[#a8acb0]" />
            <button type="button" aria-label="CLS / GEN" className="flex size-10 items-center justify-center">
              <Icon w={34} h={34} soft>
                <text x="1" y="12" fontSize="12" fontWeight="bold" fontFamily="DejaVu Sans" fill="#8c0c0c">CLS</text>
                <path d="M1 24L33 11" stroke="#1c2cf0" strokeWidth="1.500" />
                <text x="6" y="33" fontSize="11" fontWeight="bold" fontFamily="DejaVu Sans" fill="#84888c">GEN</text>
              </Icon>
            </button>
          </Palette>
        </aside>
      </div>

      <div className="flex gap-2.5 pt-px pb-1 pl-1.5">
        <Group label="Vista">
          <Tool name="Zoom avanti"><Lens><path d="M10 7.500h7M13.500 4v7" stroke="#000" strokeWidth="1.500" /></Lens></Tool>
          <Tool name="Zoom indietro"><Lens><path d="M10 7.500h7" stroke="#000" strokeWidth="1.500" /></Lens></Tool>
          <Tool name="Zoom finestra"><Lens><rect x="10.500" y="4.500" width="6" height="6" stroke="#125" /></Lens></Tool>
          <Tool name="Zoom centrato"><Lens><circle cx="13.500" cy="7.500" r="3.500" stroke="#000" /><path d="M7 7.500h13M13.500 1v13" stroke="#000" /></Lens></Tool>
          <Tool name="Zoom dinamico">{fitIcon}</Tool>
          <Sep />
          <Tool name="Sinistra"><Arrow turn={0} /></Tool>
          <Tool name="Destra"><Arrow turn={180} /></Tool>
          <Tool name="Su"><Arrow turn={90} /></Tool>
          <Tool name="Giù"><Arrow turn={270} /></Tool>
          <Tool name="Sposta">{handIcon}</Tool>
          <More />
        </Group>
        <Group label="Stampa">
          <Tool name="Anteprima">{previewIcon}</Tool>
          <Tool name="Opzioni pagina">{dpzPageIcon}</Tool>
          <Tool name="Pagine">{pagesIcon}</Tool>
          <Sep />
          <Tool name="Esporta DXF">{dxfIcon}</Tool>
          <Sep />
          <Tool name="Testo">{textIcon}</Tool>
          <Tool name="Caratteri">{abcIcon}</Tool>
          <Tool name="Colori">{brushIcon}</Tool>
          <Sep />
          <Tool name="Guida">{helpIcon}</Tool>
          <More />
        </Group>
        <Group label="Combinazione">
          <div className="flex gap-0.5">
            <output className="flex h-7 w-[70px] items-center justify-center border border-[#a4a8b0] bg-[#d6e0f6]">X = 3,11</output>
            <output className="flex h-7 w-[70px] items-center justify-center border border-[#a4a8b0] bg-[#d6e0f6]">Y = 7,69</output>
          </div>
          <Sep />
          <Tool name="Combinazione precedente"><StepIcon /></Tool>
          <button type="button" className="h-7 w-[70px] border border-[#b3b9bb] bg-[#d6dedf]">14</button>
          <Tool name="Combinazione successiva"><StepIcon flip /></Tool>
          <Tool name="Inverti">{invIcon}</Tool>
          <Tool name="Elenco">{listIcon}</Tool>
          <More />
        </Group>
      </div>

      <footer className="bg-[#ece9d8]">
        <div className="h-[22px] border-y border-t-white border-b-[#aca899]" />
        <div className="mt-0.5 flex h-5 items-center">
          <p className="h-full w-[702px] border-r border-t border-[#aca899] pl-1 leading-5 whitespace-pre">
            Aztec Informatica s.r.l.* Corso Umberto, 43 * 87050 Casole Bruzio (CS)  *  e-mail:   aztec@aztec.it  *  WEB: www.aztec.it
          </p>
          <div className="ml-0.5 h-full flex-1 border-l border-t border-[#aca899]" />
        </div>
      </footer>
    </div>
  );
}
